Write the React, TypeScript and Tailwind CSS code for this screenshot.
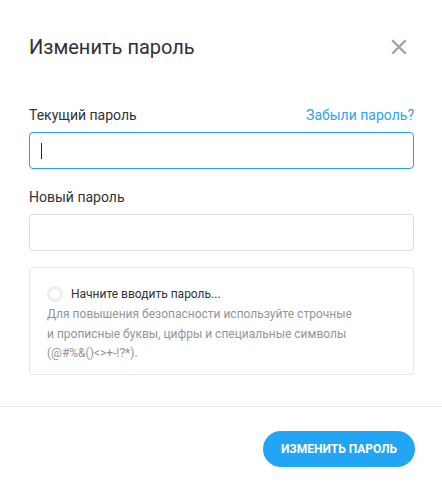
import React from "react";

export default function App() {
  return (
    <div
      className="w-[442px] h-[490px] bg-white flex flex-col"
      style={{ fontFamily: "Roboto, 'Noto Sans', sans-serif" }}
    >
      <div className="flex justify-between pl-[29px] pr-[35px] pt-[34px] h-[80px] items-start">
        <h1 className="text-[20px] leading-[26px] text-[#2e3138] font-normal">Изменить пароль</h1>
        <button className="mt-[5px] w-[16px] h-[16px] flex items-center justify-center">
          <svg width="16" height="16" viewBox="0 0 16 16">
            <path d="M2 2 L14 14 M14 2 L2 14" stroke="#9aa0a8" strokeWidth="2.2" strokeLinecap="square" />
          </svg>
        </button>
      </div>

      <div className="px-[29px] pr-[28px] pt-[25px] flex flex-col">
        <div className="flex items-center justify-between h-[20px]">
          <span className="text-[14px] text-[#303236]">Текущий пароль</span>
          <span className="text-[14px] text-[#2ea3ef]">Забыли пароль?</span>
        </div>
        <div className="mt-[7px] h-[37px] border border-[#26a0f0] rounded-[4px] flex items-center pl-[11px]">
          <div className="w-[1px] h-[16px] bg-[#222]" />
        </div>

        <div className="mt-[18px] h-[20px] flex items-center">
          <span className="text-[14px] text-[#303236]">Новый пароль</span>
        </div>
        <div className="mt-[7px] h-[37px] border border-[#dcdcdc] rounded-[4px]" />

        <div className="mt-[16px] h-[108px] border border-[#e6e6e6] rounded-[4px] pl-[17px] pt-[16px]">
          <div className="flex items-center gap-[8px] h-[20px]">
            <div className="w-[16px] h-[16px] rounded-full border-[3px] border-[#eceef1] bg-white" />
            <span className="text-[12px] text-[#303236]">Начните вводить пароль...</span>
          </div>
          <p className="mt-[1px] text-[12px] leading-[19.5px] text-[#959595]">
            Для повышения безопасности используйте строчные
            <br />
            и прописные буквы, цифры и специальные символы
            <br />
            (@#%&amp;()&lt;&gt;+-!?*).
          </p>
        </div>
      </div>

      <div className="mt-[31px] h-[1px] bg-[#e6e6e6]" />

      <div className="flex justify-end pr-[27px] pt-[24px]">
        <button className="h-[36px] px-[18px] rounded-full bg-[#22a5f5] text-white text-[12px] font-bold uppercase">
          Изменить пароль
        </button>
      </div>
    </div>
  );
}
